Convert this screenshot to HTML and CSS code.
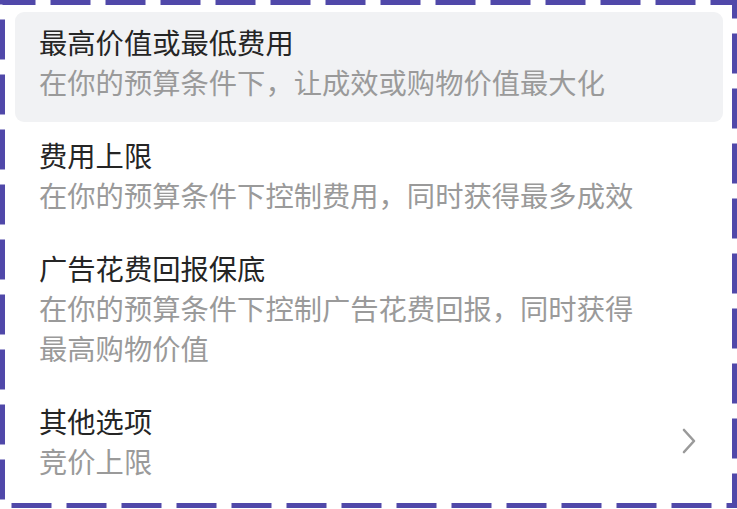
FILE: index.html
```html
<!DOCTYPE html>
<html>
<head>
  <meta charset="UTF-8">
  <title>出价策略</title>
  <link rel="stylesheet" href="styles.css">
</head>
<body>
  <div class="bid-menu">
    <svg class="bid-frame" width="737" height="509" viewBox="0 0 737 509">
      <rect x="2.5" y="2.5" width="732" height="503" fill="none" stroke="#5048a9" stroke-width="5" stroke-dasharray="40 15" stroke-dashoffset="7"/>
    </svg>

    <ul class="bid-list">
      <li class="bid-item active">
        <div class="bid-text">
          <div class="bid-title">最高价值或最低费用</div>
          <div class="bid-desc">在你的预算条件下，让成效或购物价值最大化</div>
        </div>
      </li>
      <li class="bid-item">
        <div class="bid-text">
          <div class="bid-title">费用上限</div>
          <div class="bid-desc">在你的预算条件下控制费用，同时获得最多成效</div>
        </div>
      </li>
      <li class="bid-item">
        <div class="bid-text">
          <div class="bid-title">广告花费回报保底</div>
          <div class="bid-desc">在你的预算条件下控制广告花费回报，同时获得最高购物价值</div>
        </div>
      </li>
      <li class="bid-item">
        <div class="bid-text">
          <div class="bid-title">其他选项</div>
          <div class="bid-desc">竞价上限</div>
        </div>
        <svg class="bid-arrow" width="16" height="26" viewBox="0 0 16 26">
          <path d="M3 2 L13 13 L3 24" fill="none" stroke="#9a9a9a" stroke-width="2.6" stroke-linecap="round" stroke-linejoin="round"/>
        </svg>
      </li>
    </ul>
  </div>
</body>
</html>
```

FILE: styles.css
```css
body {
  margin: 0;
  background: #fff;
  font-family: "Noto Sans CJK SC", "Noto Sans", sans-serif;
}
.bid-menu {
  position: relative;
  width: 737px;
  height: 509px;
  box-sizing: border-box;
  padding: 12px 14px 0 15px;
}
.bid-frame {
  position: absolute;
  left: 0;
  top: 0;
  pointer-events: none;
}
.bid-list {
  list-style: none;
  margin: 0;
  padding: 0;
  display: flex;
  flex-direction: column;
  gap: 3px;
}
.bid-item {
  display: flex;
  align-items: center;
  padding: 10px 25px 20px 24px;
  border-radius: 9px;
  cursor: pointer;
}
.bid-item.active {
  background-color: #f1f2f4;
}
.bid-text {
  flex: 1;
  max-width: 600px;
  font-size: 28.3px;
  line-height: 40px;
}
.bid-title {
  color: #252525;
}
.bid-desc {
  color: #9a9a9a;
}
.bid-arrow {
  margin-left: auto;
  margin-right: 1px;
}
```
